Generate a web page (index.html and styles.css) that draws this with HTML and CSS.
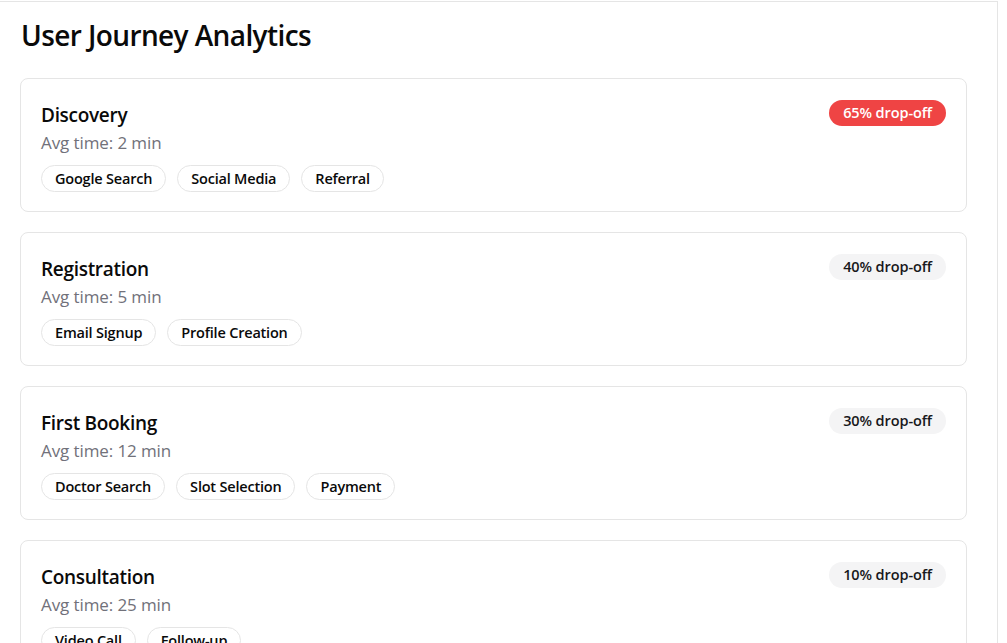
FILE: index.html
```html
<!DOCTYPE html>
<html lang="en">
<head>
<meta charset="utf-8">
<title>User Journey Analytics</title>
<link rel="stylesheet" href="styles.css">
</head>
<body>
<div class="panel">
  <h1 class="title">User Journey Analytics</h1>
  <div class="stages">
    <section class="card">
      <div class="card-head">
        <div class="info">
          <h2 class="stage">Discovery</h2>
          <p class="time">Avg time: 2 min</p>
        </div>
        <span class="badge badge-high">65% drop-off</span>
      </div>
      <div class="chips">
        <span class="chip">Google Search</span>
        <span class="chip">Social Media</span>
        <span class="chip">Referral</span>
      </div>
    </section>
    <section class="card">
      <div class="card-head">
        <div class="info">
          <h2 class="stage">Registration</h2>
          <p class="time">Avg time: 5 min</p>
        </div>
        <span class="badge">40% drop-off</span>
      </div>
      <div class="chips">
        <span class="chip">Email Signup</span>
        <span class="chip">Profile Creation</span>
      </div>
    </section>
    <section class="card">
      <div class="card-head">
        <div class="info">
          <h2 class="stage">First Booking</h2>
          <p class="time">Avg time: 12 min</p>
        </div>
        <span class="badge">30% drop-off</span>
      </div>
      <div class="chips">
        <span class="chip">Doctor Search</span>
        <span class="chip">Slot Selection</span>
        <span class="chip">Payment</span>
      </div>
    </section>
    <section class="card">
      <div class="card-head">
        <div class="info">
          <h2 class="stage">Consultation</h2>
          <p class="time">Avg time: 25 min</p>
        </div>
        <span class="badge">10% drop-off</span>
      </div>
      <div class="chips">
        <span class="chip">Video Call</span>
        <span class="chip">Follow-up</span>
      </div>
    </section>
  </div>
</div>
</body>
</html>
```
FILE: styles.css
```css
* { box-sizing: border-box; }
html, body { margin: 0; padding: 0; background: #fff; }
body {
  font-family: "Open Sans", "Noto Sans", sans-serif;
  color: #0a0a0a;
  overflow: hidden;
}
.panel {
  margin: 1px 0 0 -1px;
  width: 999px;
  min-height: 700px;
  border: 1px solid #e5e5e5;
  padding: 0 0 0 20px;
}
.title {
  margin: 0;
  padding: 15px 0 0 1px;
  font-size: 28px;
  font-weight: 600;
  line-height: 36px;
  letter-spacing: -0.6px;
}
.stages {
  margin-top: 25px;
  display: flex;
  flex-direction: column;
  gap: 20px;
  width: 947px;
}
.card {
  border: 1px solid #e5e5e5;
  border-radius: 8px;
  padding: 21px 20px 19px 20px;
}
.card-head {
  display: flex;
  justify-content: space-between;
  align-items: flex-start;
}
.stage {
  margin: -1px 0 1px 0;
  font-size: 19px;
  font-weight: 600;
  line-height: 32px;
  letter-spacing: -0.3px;
}
.time {
  margin: 0;
  font-size: 17px;
  line-height: 22px;
  color: #71717a;
  letter-spacing: -0.1px;
}
.badge {
  height: 26px;
  line-height: 26px;
  padding: 0 14px;
  border-radius: 13px;
  background: #f4f4f5;
  color: #18181b;
  font-size: 14.5px;
  font-weight: 600;
  letter-spacing: -0.1px;
}
.badge-high {
  background: #ef4444;
  color: #fff;
}
.chips {
  display: flex;
  gap: 11px;
  margin-top: 11px;
}
.chip {
  height: 27px;
  line-height: 25px;
  padding: 0 13px;
  border: 1px solid #e5e5e5;
  border-radius: 14px;
  font-size: 14.5px;
  font-weight: 600;
  letter-spacing: -0.2px;
}
```
